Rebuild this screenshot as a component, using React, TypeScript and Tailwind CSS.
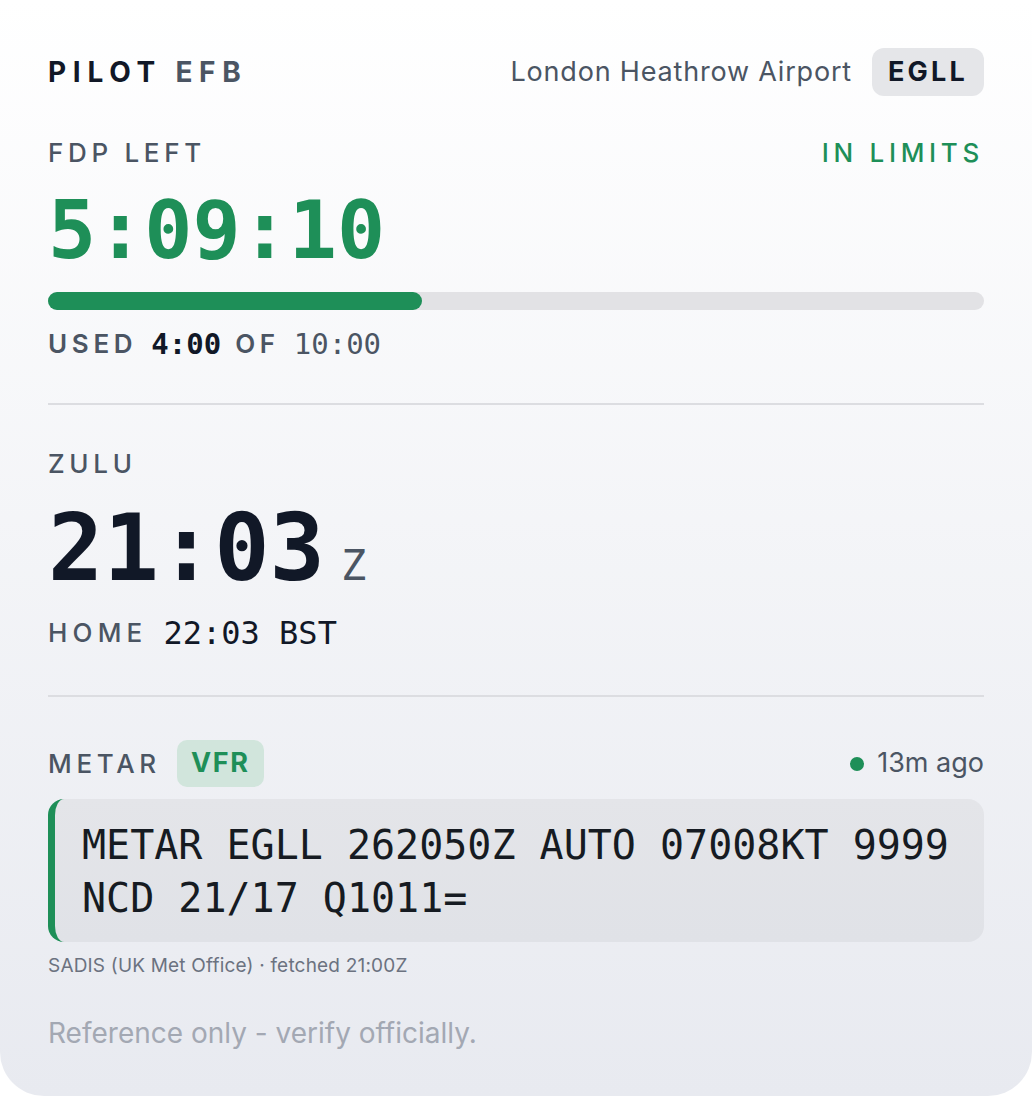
import React from "react";

const sans = "font-['Inter','Noto_Sans',sans-serif]";
const mono = "font-['DejaVu_Sans_Mono','Liberation_Mono',monospace]";

function Label({ children }: { children: React.ReactNode }) {
  return (
    <span className={`${sans} text-[26px] leading-[32px] font-medium tracking-[0.18em] text-[#4b5563]`}>
      {children}
    </span>
  );
}

function Divider() {
  return <div className="h-[2px] bg-[#dcdde1]" />;
}

export default function App() {
  const used = 4;
  const total = 10;

  return (
    <div className="min-h-screen bg-white">
      <div
        className={`${sans} flex flex-col rounded-b-[44px] bg-gradient-to-b from-white to-[#e8eaf0] px-12 pt-12 pb-[47px]`}
      >
        {/* Header */}
        <div className="flex h-12 items-center justify-between">
          <div className="text-[28px] font-bold tracking-[0.24em]">
            <span className="text-[#111827]">PILOT</span>{" "}
            <span className="text-[#4b5563]">EFB</span>
          </div>
          <div className="flex items-center gap-5">
            <span className="text-[27px] tracking-[0.03em] text-[#4b5563]">London Heathrow Airport</span>
            <span className="flex h-12 w-[112px] items-center justify-center rounded-xl bg-[#e5e6e9] text-[27px] font-bold tracking-[0.12em] text-[#111827]">
              EGLL
            </span>
          </div>
        </div>

        {/* FDP */}
        <div className="mt-[41px] flex items-center justify-between">
          <Label>FDP LEFT</Label>
          <span className="text-[26px] leading-[32px] font-medium tracking-[0.18em] text-[#1e8f58]">
            IN LIMITS
          </span>
        </div>
        <div className={`${mono} mt-[22px] text-[80px] leading-[80px] font-bold text-[#1e8f58]`}>
          5:09:10
        </div>
        <div className="mt-[21px] h-[18px] rounded-full bg-[#e2e2e5]">
          <div
            className="h-full rounded-full bg-[#1e8f58]"
            style={{ width: `${(used / total) * 100}%` }}
          />
        </div>
        <div className="mt-[18px] flex items-center gap-[14px] leading-[32px]">
          <span className="text-[26px] font-semibold tracking-[0.18em] text-[#4b5563]">USED</span>
          <span className={`${mono} text-[29px] font-bold text-[#111827]`}>4:00</span>
          <span className="text-[26px] font-semibold tracking-[0.18em] text-[#4b5563]">OF</span>
          <span className={`${mono} text-[29px] text-[#4b5563]`}>10:00</span>
        </div>

        <div className="mt-[43px]">
          <Divider />
        </div>

        {/* Zulu */}
        <div className="mt-[43px]">
          <Label>ZULU</Label>
        </div>
        <div className="mt-[23px] flex h-[92px] items-baseline gap-4">
          <span className={`${mono} text-[92px] leading-[92px] font-bold text-[#111827]`}>21:03</span>
          <span className={`${mono} text-[42px] leading-none text-[#4b5563]`}>Z</span>
        </div>
        <div className="mt-5 flex items-center gap-4 leading-[36px]">
          <span className="text-[26px] font-medium tracking-[0.2em] text-[#4b5563]">HOME</span>
          <span className={`${mono} text-[32px] font-medium text-[#111827]`}>22:03 BST</span>
        </div>

        <div className="mt-[44px]">
          <Divider />
        </div>

        {/* METAR */}
        <div className="mt-[43px] flex h-[47px] items-center justify-between">
          <div className="flex items-center gap-4">
            <Label>METAR</Label>
            <span className="flex h-[47px] w-[87px] items-center justify-center rounded-[10px] bg-[#d1e5dc] text-[27px] font-bold tracking-[0.06em] text-[#1e8f58]">
              VFR
            </span>
          </div>
          <div className="flex items-center gap-[13px]">
            <span className="h-[14px] w-[14px] rounded-full bg-[#1e8f58]" />
            <span className="text-[27px] text-[#4b5563]">13m ago</span>
          </div>
        </div>
        <div className="mt-3 rounded-2xl border-l-[7px] border-[#1e8f58] bg-gradient-to-b from-[#e4e5e9] to-[#e0e2e7] pt-5 pr-6 pb-[17px] pl-[27px]">
          <p className={`${mono} text-[40px] leading-[53px] text-[#161b22]`}>
            METAR EGLL 262050Z AUTO 07008KT 9999 NCD 21/17 Q1011=
          </p>
        </div>
        <div className="mt-3 text-[19px] leading-[24px] tracking-[0.01em] text-[#6b7280]">
          SADIS (UK Met Office) · fetched 21:00Z
        </div>

        <div className="mt-[39px] text-[28px] leading-[32px] text-[#a3a8b3]">
          Reference only - verify officially.
        </div>
      </div>
    </div>
  );
}
